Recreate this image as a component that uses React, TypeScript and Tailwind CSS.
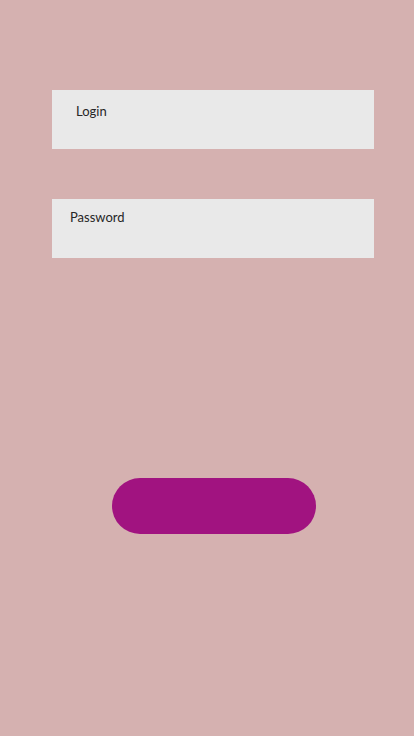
export default function App() {
  return (
    <div className="min-h-[736px] w-full bg-[#d5b1b0] font-['Lato',sans-serif]">
      <div className="flex flex-col px-[52px] pt-[90px]">
        {/* Login field */}
        <div className="h-[59px] w-[322px] bg-[#e9e9e9] pl-6 pt-[13px]">
          <span className="block text-[13px] leading-4 text-[#262626]">Login</span>
        </div>

        {/* Password field */}
        <div className="mt-[50px] h-[59px] w-[322px] bg-[#e9e9e9] pl-[18px] pt-[10px]">
          <span className="block text-[13px] leading-4 text-[#262626]">Password</span>
        </div>

        {/* Submit button */}
        <button
          type="button"
          className="ml-[60px] mt-[220px] h-[56px] w-[204px] rounded-full bg-[#a11380]"
          aria-label="Submit"
        ></button>
      </div>
    </div>
  );
}
